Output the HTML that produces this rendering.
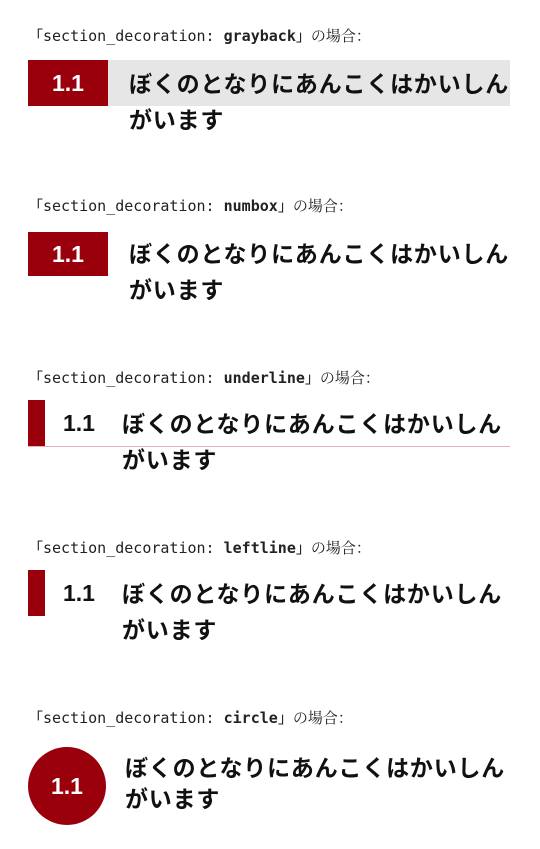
<!DOCTYPE html>
<html><head><meta charset="utf-8"><style>
body{margin:0;width:540px;height:849px;background:#fff;position:relative;overflow:hidden;font-family:"Liberation Sans","Noto Sans CJK JP",sans-serif;color:#111}
.lab{position:absolute;left:28px;font-size:15px;font-family:"DejaVu Sans Mono","Noto Sans CJK JP",monospace;color:#222;line-height:20px}
.lab b{font-weight:bold}
.lab .j{font-family:"Noto Serif CJK SC","Liberation Serif",serif;font-size:15px}
.t{position:absolute;font-size:23px;font-weight:bold;line-height:36px;letter-spacing:0.8px;white-space:nowrap}
.red{position:absolute;background:#99000c;color:#fff;font-weight:bold;font-size:23px;display:flex;align-items:center;justify-content:center}
.n{position:absolute;font-size:23px;font-weight:bold}
</style></head><body>
<div class="lab" style="top:26px">「section_decoration: <b>grayback</b>」<span class="j">の場合：</span></div>
<div style="position:absolute;left:28px;top:60px;width:482px;height:46px;background:#e6e6e6"></div>
<div class="red" style="left:28px;top:60px;width:80px;height:46px">1.1</div>
<div class="t" style="left:129px;top:66px">ぼくのとなりにあんこくはかいしん<br>がいます</div>

<div class="lab" style="top:196px">「section_decoration: <b>numbox</b>」<span class="j">の場合：</span></div>
<div class="red" style="left:28px;top:232px;width:80px;height:44px">1.1</div>
<div class="t" style="left:129px;top:236px">ぼくのとなりにあんこくはかいしん<br>がいます</div>

<div class="lab" style="top:368px">「section_decoration: <b>underline</b>」<span class="j">の場合：</span></div>
<div style="position:absolute;left:28px;top:400px;width:17px;height:46px;background:#99000c"></div>
<div style="position:absolute;left:28px;top:446px;width:482px;height:1px;background:#e8b0b4"></div>
<div class="n" style="left:63px;top:410px">1.1</div>
<div class="t" style="left:122px;top:406px">ぼくのとなりにあんこくはかいしん<br>がいます</div>

<div class="lab" style="top:538px">「section_decoration: <b>leftline</b>」<span class="j">の場合：</span></div>
<div style="position:absolute;left:28px;top:570px;width:17px;height:46px;background:#99000c"></div>
<div class="n" style="left:63px;top:580px">1.1</div>
<div class="t" style="left:122px;top:576px">ぼくのとなりにあんこくはかいしん<br>がいます</div>

<div class="lab" style="top:708px">「section_decoration: <b>circle</b>」<span class="j">の場合：</span></div>
<div class="red" style="left:28px;top:747px;width:78px;height:78px;border-radius:50%">1.1</div>
<div class="t" style="left:125px;top:753px;line-height:31px">ぼくのとなりにあんこくはかいしん<br>がいます</div>
</body></html>
